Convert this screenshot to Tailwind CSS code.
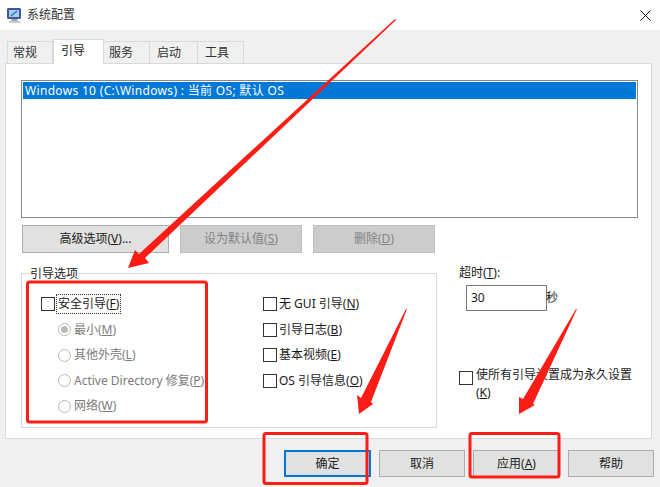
<!DOCTYPE html>
<html lang="zh">
  <head>
    <meta charset="UTF-8" />
    <title>系统配置</title>
    <script src="https://cdn.jsdelivr.net/npm/@tailwindcss/browser@4"></script>
  </head>
  <body class="bg-white">
    <div class="relative w-[660px] h-[487px] overflow-hidden bg-white text-[12px] leading-[18px] text-[#1a1a1a] font-['Noto_Sans','Noto_Sans_CJK_SC',sans-serif]">
      <!-- title bar -->
      <div class="flex items-center h-[30px] pl-[6px] pr-[9px]">
        <svg class="w-[17px] h-[17px]" viewBox="0 0 17 17">
          <path d="M2 1h12l1 1v9l-1 1H2l-1-1V2z" fill="#3f5a96" />
          <path d="M3 3h10v7H3z" fill="#a5cdf0" />
          <path d="M5 9l6-5" stroke="#2a6fc0" stroke-width="1.2" />
          <path d="M6 12h5l1 2H5z" fill="#9ea4ae" />
          <path d="M3 14h11l1 2H3z" fill="#c9ccd2" />
        </svg>
        <span class="ml-[4px] text-[#333]">系统配置</span>
        <svg class="ml-auto w-[11px] h-[11px]" viewBox="0 0 11 11">
          <path d="M.5.5l10 10M10.5.5l-10 10" stroke="#111" stroke-width="1" />
        </svg>
      </div>

      <div class="h-[457px] bg-[#f0f0f0] pt-[9px] pl-[5px]">
        <!-- tabs -->
        <div class="flex items-end h-[25px] pl-[2px] relative z-10">
          <div class="flex items-center pl-[5px] w-[46px] h-[22px] bg-[#f0f0f0] border border-b-0 border-[#d9d9d9] mb-[1px] text-[#333]">常规</div>
          <div class="flex items-center pl-[7px] w-[51px] h-[25px] pb-[3px] bg-white border border-b-0 border-[#d9d9d9]">引导</div>
          <div class="flex items-center pl-[5px] w-[46px] h-[22px] bg-[#f0f0f0] border border-b-0 border-l-0 border-[#d9d9d9] mb-[1px] text-[#333]">服务</div>
          <div class="flex items-center pl-[7px] w-[48px] h-[22px] bg-[#f0f0f0] border border-b-0 border-l-0 border-[#d9d9d9] mb-[1px] text-[#333]">启动</div>
          <div class="flex items-center pl-[7px] w-[46px] h-[22px] bg-[#f0f0f0] border border-b-0 border-l-0 border-[#d9d9d9] mb-[1px] text-[#333]">工具</div>
        </div>

        <!-- panel -->
        <div class="w-[647px] h-[376px] -mt-[1px] bg-white border border-[#d9d9d9] pt-[16px] pl-[15px]">
          <!-- list -->
          <div class="w-[617px] h-[138px] border border-[#828790] p-[1px]">
            <div class="h-[17px] leading-[17px] pl-[2px] bg-[#0078d7] text-white tracking-[0.32px]">Windows 10 (C:\Windows) : 当前 OS; 默认 OS</div>
          </div>

          <!-- list buttons -->
          <div class="flex gap-[11px] mt-[7px] ml-[1px]">
            <div class="flex items-center justify-center w-[147px] h-[28px] bg-[#e1e1e1] border border-[#adadad]"><span>高级选项(<u>V</u>)...</span></div>
            <div class="flex items-center justify-center w-[122px] h-[28px] bg-[#cccccc] border border-[#bfbfbf] text-[#838383]"><span>设为默认值(<u>S</u>)</span></div>
            <div class="flex items-center justify-center w-[122px] h-[28px] bg-[#cccccc] border border-[#bfbfbf] text-[#838383]"><span>删除(<u>D</u>)</span></div>
          </div>

          <div class="flex mt-[20px]">
            <!-- boot options group -->
            <div class="relative flex w-[416px] h-[155px] border border-[#d9d9d9] pt-[20px] pl-[19px]">
              <div class="absolute -top-[9px] left-[7px] px-[1px] bg-white">引导选项</div>
              <div class="w-[222px]">
                <div class="flex items-center h-[20px]">
                  <span class="w-[14px] h-[14px] border border-[#333] bg-white"></span>
                  <span class="ml-[1px] px-[1px] border border-dotted border-[#333] h-[20px] leading-[18px]">安全引导(<u>F</u>)</span>
                </div>
                <div class="flex flex-col pl-[17px] pt-[3px] text-[#7a7a7a]">
                  <div class="flex items-center h-[25.5px]">
                    <span class="flex items-center justify-center w-[13px] h-[13px] rounded-full border border-[#b9b9b9]"><span class="w-[7px] h-[7px] rounded-full bg-[#b9b9b9]"></span></span>
                    <span class="ml-[3px]">最小(<u>M</u>)</span>
                  </div>
                  <div class="flex items-center h-[25.5px]">
                    <span class="w-[13px] h-[13px] rounded-full border border-[#b9b9b9]"></span>
                    <span class="ml-[3px]">其他外壳(<u>L</u>)</span>
                  </div>
                  <div class="flex items-center h-[25.5px]">
                    <span class="w-[13px] h-[13px] rounded-full border border-[#b9b9b9]"></span>
                    <span class="ml-[3px] whitespace-nowrap">Active Directory 修复(<u>P</u>)</span>
                  </div>
                  <div class="flex items-center h-[25.5px]">
                    <span class="w-[13px] h-[13px] rounded-full border border-[#b9b9b9]"></span>
                    <span class="ml-[3px]">网络(<u>W</u>)</span>
                  </div>
                </div>
              </div>
              <div class="flex flex-col">
                <div class="flex items-center h-[20px] mb-[5.5px]">
                  <span class="w-[14px] h-[14px] border border-[#333]"></span><span class="ml-[2px]">无 GUI 引导(<u>N</u>)</span>
                </div>
                <div class="flex items-center h-[20px] mb-[5.5px]">
                  <span class="w-[14px] h-[14px] border border-[#333]"></span><span class="ml-[2px]">引导日志(<u>B</u>)</span>
                </div>
                <div class="flex items-center h-[20px] mb-[5.5px]">
                  <span class="w-[14px] h-[14px] border border-[#333]"></span><span class="ml-[2px]">基本视频(<u>E</u>)</span>
                </div>
                <div class="flex items-center h-[20px]">
                  <span class="w-[14px] h-[14px] border border-[#333]"></span><span class="ml-[2px]">OS 引导信息(<u>O</u>)</span>
                </div>
              </div>
            </div>

            <!-- timeout -->
            <div class="ml-[22px] -mt-[9px]">
              <div>超时(<u>T</u>):</div>
              <div class="flex items-center mt-[3px] ml-[7px]">
                <div class="w-[81px] h-[26px] leading-[24px] pl-[4px] border border-[#7a7a7a]">30</div>
                <span class="-ml-[1px]">秒</span>
              </div>
              <div class="flex items-start mt-[58px]">
                <span class="mt-[2px] w-[14px] h-[14px] border border-[#333] shrink-0"></span>
                <span class="ml-[3px] w-[160px] leading-[18px] -mt-[3px]">使所有引导设置成为永久设置 (<u>K</u>)</span>
              </div>
            </div>
          </div>
        </div>

        <!-- dialog buttons -->
        <div class="flex mt-[11px] ml-[279px] gap-[8px]">
          <div class="flex items-center justify-center w-[87px] h-[27px] bg-[#e1e1e1] border-2 border-[#0078d7]">确定</div>
          <div class="flex items-center justify-center w-[86px] h-[27px] bg-[#e1e1e1] border border-[#adadad]">取消</div>
          <div class="flex items-center justify-center w-[87px] h-[27px] bg-[#e1e1e1] border border-[#adadad]"><span>应用(<u>A</u>)</span></div>
          <div class="flex items-center justify-center w-[86px] h-[27px] bg-[#e1e1e1] border border-[#adadad]">帮助</div>
        </div>
      </div>

      <!-- red annotations drawn on top of the screenshot -->
      <svg class="absolute top-0 left-0 w-[660px] h-[487px] pointer-events-none" viewBox="0 0 660 487">
        <g fill="none" stroke="#fb1d16" stroke-width="3">
          <rect x="27.5" y="282" width="179" height="140" rx="2" />
          <rect x="264" y="433.5" width="103" height="50" rx="2" />
          <rect x="470" y="433.5" width="89" height="43.5" rx="2" />
        </g>
        <g fill="#fb1d16">
          <path d="M396 20L145 258L149 263L128 268L135 250L139 254L395 19z" />
          <path d="M407 309L371 402L373 404L359 414L357 395L361 398L406 309z" />
          <path d="M577 309L533 404L535 405L519 414L519 397L523 399L576 309z" />
        </g>
      </svg>
    </div>
  </body>
</html>
